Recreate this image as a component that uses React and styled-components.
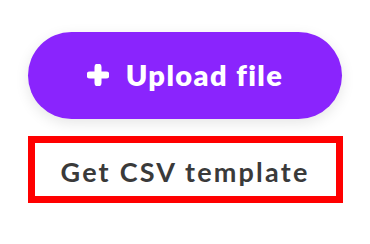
import React from 'react';
import styled, { createGlobalStyle } from 'styled-components';

const Global = createGlobalStyle`
    html, body {
        margin: 0;
        padding: 0;
        background: #ffffff;
    }
    body {
        font-family: "Lato", "Noto Sans", sans-serif;
    }
`;

const Container = styled.div`
    display: flex;
    flex-direction: column;
    align-items: center;
    padding-top: 32px;
    gap: 17px;
    width: 370px;
`;

const UploadButton = styled.button`
    display: flex;
    align-items: center;
    justify-content: center;
    gap: 17px;
    width: 314px;
    height: 87px;
    border: none;
    border-radius: 44px;
    background-color: #8a24fd;
    color: #ffffff;
    font-family: inherit;
    font-size: 29px;
    font-weight: 800;
    letter-spacing: 1.4px;
    box-shadow: 0 4px 14px rgba(0, 0, 0, 0.1);
    cursor: pointer;
    padding: 0 0 2px 0;
`;

const PlusIcon = styled.svg`
    width: 22px;
    height: 22px;
    flex-shrink: 0;
`;

const TemplateButton = styled.button`
    display: flex;
    align-items: center;
    justify-content: center;
    box-sizing: border-box;
    width: 315px;
    height: 67px;
    border: 7px solid #ff0000;
    background: #ffffff;
    color: #3a3a3a;
    font-family: inherit;
    font-size: 27px;
    font-weight: 700;
    letter-spacing: 2.2px;
    cursor: pointer;
    padding: 3px 0 0 0;
`;

const App = () => {
    return (
        <>
            <Global />
            <Container>
                <UploadButton>
                    <PlusIcon viewBox="0 0 22 22">
                        <path d="M11 3v16M3 11h16" stroke="#ffffff" strokeWidth="7" strokeLinecap="round" />
                    </PlusIcon>
                    Upload file
                </UploadButton>
                <TemplateButton>Get CSV template</TemplateButton>
            </Container>
        </>
    )
}

export default App
